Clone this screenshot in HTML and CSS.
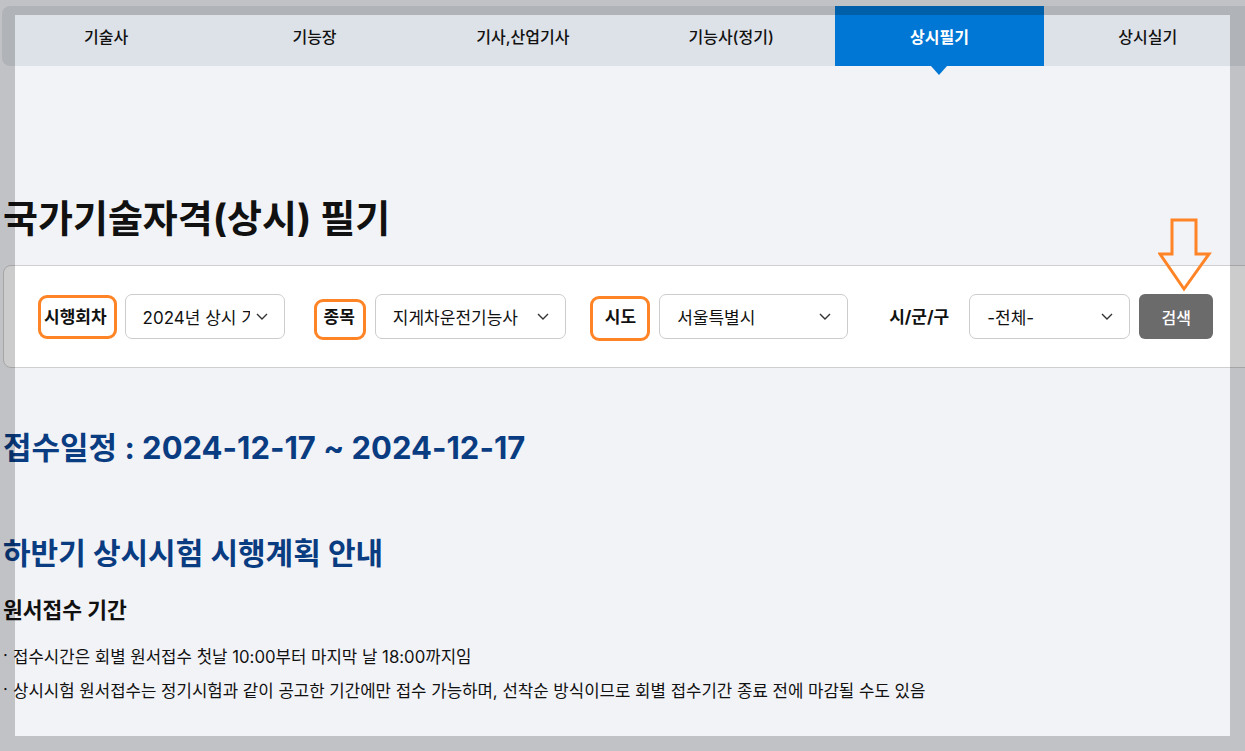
FILE: index.html
```html
<!DOCTYPE html>
<html lang="ko">
<head>
<meta charset="utf-8">
<title>국가기술자격(상시) 필기</title>
<link rel="stylesheet" href="styles.css">
</head>
<body>
<div class="page">
  <nav class="tabs">
    <a class="tab">기술사</a>
    <a class="tab">기능장</a>
    <a class="tab">기사,산업기사</a>
    <a class="tab">기능사(정기)</a>
    <a class="tab active">상시필기</a>
    <a class="tab">상시실기</a>
  </nav>

  <h1 class="title">국가기술자격(상시) 필기</h1>

  <div class="search">
    <span class="label mark mark-a">시행회차</span>
    <div class="select s1"><span class="val">2024년 상시 기능사 제1회</span><svg class="chev" viewBox="0 0 12 7"><path d="M1 1l5 5 5-5"/></svg></div>
    <span class="label mark mark-b gap">종목</span>
    <div class="select s2"><span class="val">지게차운전기능사</span><svg class="chev" viewBox="0 0 12 7"><path d="M1 1l5 5 5-5"/></svg></div>
    <span class="label mark mark-c gap gap-c">시도</span>
    <div class="select s3"><span class="val">서울특별시</span><svg class="chev" viewBox="0 0 12 7"><path d="M1 1l5 5 5-5"/></svg></div>
    <span class="label gap gap-d">시/군/구</span>
    <div class="select s4"><span class="val">-전체-</span><svg class="chev" viewBox="0 0 12 7"><path d="M1 1l5 5 5-5"/></svg></div>
    <div class="btn-wrap">
      <button class="btn">검색</button>
      <svg class="arrow" viewBox="0 0 54 74"><path d="M14 2H38V36H51L26 71L2 36H14Z"/></svg>
    </div>
  </div>

  <h2 class="period">접수일정 : 2024-12-17 ~ 2024-12-17</h2>

  <h2 class="plan">하반기 상시시험 시행계획 안내</h2>
  <h3 class="sub">원서접수 기간</h3>
  <ul class="notes">
    <li>접수시간은 회별 원서접수 첫날 10:00부터 마지막 날 18:00까지임</li>
    <li>상시시험 원서접수는 정기시험과 같이 공고한 기간에만 접수 가능하며, 선착순 방식이므로 회별 접수기간 종료 전에 마감될 수도 있음</li>
  </ul>
</div>
<div class="frame"></div>
</body>
</html>
```

FILE: styles.css
```css
* { box-sizing: border-box; }
html, body { margin: 0; padding: 0; }
body {
  background: #f2f3f7;
  font-family: "Inter", "Noto Sans CJK KR", sans-serif;
  color: #111;
  overflow: hidden;
  width: 1245px;
  height: 751px;
}
.page { padding: 6px 0 0 2px; }

.tabs {
  display: flex;
  width: 1250px;
  height: 60px;
  background: #dde1e8;
  border-radius: 8px 0 0 8px;
}
.tab {
  flex: 1;
  display: flex;
  align-items: center;
  justify-content: center;
  font-size: 16px;
  font-weight: 500;
  color: #111;
  position: relative;
}
.tab.active {
  background: #0077d4;
  color: #fff;
  font-weight: 700;
}
.tab.active::after {
  content: "";
  position: absolute;
  left: 50%;
  top: 100%;
  margin-left: -8px;
  border-left: 8px solid transparent;
  border-right: 8px solid transparent;
  border-top: 9px solid #0077d4;
}

.title {
  margin: 129px 0 0 1px;
  font-size: 38px;
  line-height: 46px;
  font-weight: 700;
}

.search {
  margin: 24px 0 0 1px;
  width: 1250px;
  height: 103px;
  background: #fff;
  border: 1px solid #cfcfcf;
  border-radius: 8px;
  display: flex;
  align-items: center;
  padding-left: 40px;
}
.label {
  font-size: 17px;
  font-weight: 700;
  line-height: 24px;
  white-space: nowrap;
  position: relative;
  margin-right: 18px;
}
.label.gap { margin-left: 39px; margin-right: 20px; }
.label.gap-c { margin-right: 23px; }
.label.gap-d { margin-left: 41px; }
.mark::before {
  content: "";
  position: absolute;
  border: 3px solid #ff8426;
  border-radius: 9px;
}
.mark-a::before { left: -6px; right: -10px; top: -10px; bottom: -10px; }
.mark-b::before { left: -10px; right: -11px; top: -6px; bottom: -11px; }
.mark-c::before { left: -15px; right: -14px; top: -9px; bottom: -12px; }

.select {
  height: 45px;
  border: 1px solid #cccccc;
  border-radius: 7px;
  background: #fff;
  display: flex;
  align-items: center;
  padding-left: 17px;
  position: relative;
  font-size: 17px;
}
.select .val {
  overflow: hidden;
  white-space: nowrap;
  flex: 1;
}
.chev {
  width: 12px;
  height: 7px;
  fill: none;
  stroke: #333;
  stroke-width: 1.4;
  flex: none;
}
.s1 { width: 160px; padding-right: 16px; }
.s1 .val { margin-right: 6px; }
.s2 { width: 191px; padding-right: 16px; }
.s3 { width: 189px; padding-right: 16px; }
.s4 { width: 161px; padding-right: 16px; }

.btn-wrap { position: relative; margin-left: 9px; }
.btn {
  width: 74px;
  height: 45px;
  border: 0;
  border-radius: 6px;
  background: #6b6b6b;
  color: #fff;
  font: inherit;
  font-size: 16px;
  font-weight: 500;
  display: block;
}
.arrow {
  position: absolute;
  left: 19px;
  bottom: calc(100% + 2px);
  width: 54px;
  height: 74px;
  fill: none;
  stroke: #ff8426;
  stroke-width: 3;
}

.period {
  margin: 60px 0 0 1px;
  font-size: 31px;
  line-height: 40px;
  font-weight: 700;
  color: #0a3c82;
}
.plan {
  margin: 65px 0 0 1px;
  font-size: 30px;
  line-height: 40px;
  font-weight: 700;
  color: #0a3c82;
}
.sub {
  margin: 23px 0 0 1px;
  font-size: 21.5px;
  line-height: 28px;
  font-weight: 700;
}
.notes {
  list-style: none;
  margin: 16px 0 0 1px;
  padding: 0;
}
.notes li {
  font-size: 16.75px;
  line-height: 34px;
  position: relative;
  padding-left: 10px;
}
.notes li::before {
  content: "·";
  position: absolute;
  left: 0;
  top: -2px;
}

.frame {
  position: fixed;
  inset: 0;
  border: 15px solid rgba(0, 0, 0, 0.2);
  pointer-events: none;
}
```
